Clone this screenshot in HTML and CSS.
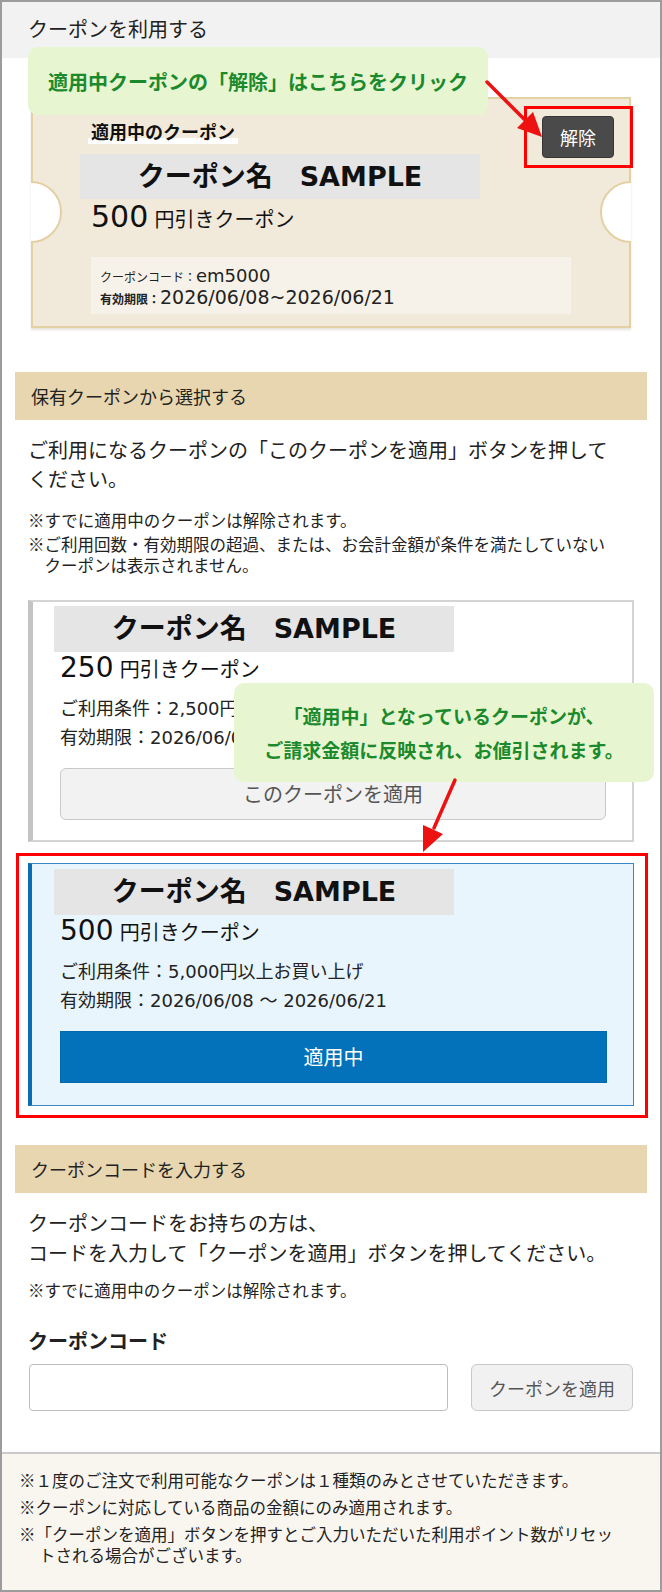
FILE: index.html
```html
<!DOCTYPE html>
<html lang="ja">
<head>
<meta charset="utf-8">
<title>クーポンを利用する</title>
<link rel="stylesheet" href="styles.css">
</head>
<body>
<div class="panel">
  <h1 class="panel-title">クーポンを利用する</h1>

  <section class="current">
    <div class="ticket">
      <span class="notch notch-left"></span>
      <span class="notch notch-right"></span>
      <p class="ticket-label">適用中のクーポン</p>
      <p class="coupon-name ticket-name">クーポン名　SAMPLE</p>
      <p class="ticket-amount"><span class="amount-num">500</span> 円引きクーポン</p>
      <div class="ticket-info">
        <p><span class="info-key">クーポンコード：</span><span class="info-code">em5000</span></p>
        <p><span class="info-key strong">有効期限：</span><span class="info-date">2026/06/08~2026/06/21</span></p>
      </div>
      <button class="release-btn" type="button">解除</button>
      <span class="focus-frame release-frame"></span>
    </div>
  </section>

  <section class="block block-owned">
    <h2 class="block-head">保有クーポンから選択する</h2>
    <div class="block-body">
      <p class="lead">ご利用になるクーポンの「このクーポンを適用」ボタンを押してください。</p>
      <ul class="notes">
        <li>※すでに適用中のクーポンは解除されます。</li>
        <li>※ご利用回数・有効期限の超過、または、お会計金額が条件を満たしていないクーポンは表示されません。</li>
      </ul>

      <div class="coupon-list">
        <div class="coupon">
          <p class="coupon-name">クーポン名　SAMPLE</p>
          <p class="coupon-amount"><span class="amount-num">250</span> 円引きクーポン</p>
          <p class="coupon-meta">ご利用条件：2,500円以上お買い上げ</p>
          <p class="coupon-meta">有効期限：2026/06/08 〜 2026/06/21</p>
          <button class="apply-btn" type="button">このクーポンを適用</button>
        </div>

        <div class="coupon is-active">
          <p class="coupon-name">クーポン名　SAMPLE</p>
          <p class="coupon-amount"><span class="amount-num">500</span> 円引きクーポン</p>
          <p class="coupon-meta">ご利用条件：5,000円以上お買い上げ</p>
          <p class="coupon-meta">有効期限：2026/06/08 〜 2026/06/21</p>
          <button class="apply-btn is-applied" type="button">適用中</button>
          <span class="focus-frame active-frame"></span>
        </div>
      </div>
    </div>
  </section>

  <section class="block block-code">
    <h2 class="block-head">クーポンコードを入力する</h2>
    <div class="block-body">
      <p class="lead lead-code">クーポンコードをお持ちの方は、<br>コードを入力して「クーポンを適用」ボタンを押してください。</p>
      <ul class="notes notes-code">
        <li>※すでに適用中のクーポンは解除されます。</li>
      </ul>
      <label class="form-label" for="coupon-code">クーポンコード</label>
      <div class="code-row">
        <input class="code-input" id="coupon-code" type="text">
        <button class="code-btn" type="button">クーポンを適用</button>
      </div>
    </div>
  </section>

  <footer class="panel-foot">
    <ul class="foot-notes">
      <li>※１度のご注文で利用可能なクーポンは１種類のみとさせていただきます。</li>
      <li>※クーポンに対応している商品の金額にのみ適用されます。</li>
      <li>※「クーポンを適用」ボタンを押すとご入力いただいた利用ポイント数がリセットされる場合がございます。</li>
    </ul>
  </footer>

  <!-- guide callouts -->
  <div class="callout callout-release">適用中クーポンの「解除」はこちらをクリック</div>
  <svg class="pointer pointer-release" viewBox="480 75 70 70" aria-hidden="true">
    <line x1="487" y1="82" x2="527" y2="122" stroke="#ee1111" stroke-width="3.5" stroke-linecap="round"/>
    <polygon points="542,137 517,128 533,112" fill="#ee1111"/>
  </svg>

  <div class="callout callout-applied">「適用中」となっているクーポンが、<br>ご請求金額に反映され、お値引されます。</div>
  <svg class="pointer pointer-applied" viewBox="415 775 50 85" aria-hidden="true">
    <line x1="455" y1="780" x2="434" y2="828" stroke="#ee1111" stroke-width="3.5" stroke-linecap="round"/>
    <polygon points="423,852 443,834 423,825" fill="#ee1111"/>
  </svg>
</div>
</body>
</html>
```

FILE: styles.css
```css
* {
  box-sizing: border-box;
  margin: 0;
  padding: 0;
}

html,
body {
  background: #fff;
}

body {
  font-family: "Noto Sans CJK JP", sans-serif;
  color: #222;
}

button,
input {
  font-family: inherit;
}

.panel {
  position: relative;
  display: flex;
  flex-direction: column;
  width: 662px;
  min-height: 1592px;
  border: 2px solid #9c9c9c;
}

.panel-title {
  height: 56px;
  padding-left: 26px;
  background: #f2f2f2;
  font-size: 20px;
  font-weight: 400;
  line-height: 54px;
  color: #222;
}

/* ---- currently applied coupon ticket ---- */
.current {
  padding: 39px 29px 0;
}

.ticket {
  position: relative;
  height: 231px;
  padding: 21px 0 0 58px;
  border: 2px solid #e3d1a4;
  background: #f1e9da;
  box-shadow: 0 2px 2px rgba(120, 100, 60, 0.18);
}

.notch {
  position: absolute;
  top: 82px;
  width: 62px;
  height: 62px;
  border: 2px solid #e3d1a4;
  border-radius: 50%;
  background: #fff;
}

.notch-left {
  left: -33px;
  clip-path: inset(0 0 0 50%);
}

.notch-right {
  left: 567px;
  clip-path: inset(0 50% 0 0);
}

.ticket-label {
  width: max-content;
  margin-left: -3px;
  padding: 0 3px 2px;
  font-size: 18px;
  font-weight: 700;
  line-height: 22px;
  color: #111;
  background: linear-gradient(transparent 18px, #fff 18px);
}

.coupon-name {
  width: 400px;
  height: 46px;
  background: #e5e5e5;
  text-align: center;
  font-family: "DejaVu Sans", "Noto Sans CJK JP", sans-serif;
  font-size: 27px;
  font-weight: 700;
  line-height: 46px;
  color: #111;
  white-space: nowrap;
}

.ticket-name {
  height: 45px;
  margin: 10px 0 0 -11px;
  line-height: 45px;
}

.ticket-amount {
  height: 40px;
  margin-top: 1px;
  font-family: "DejaVu Sans", "Noto Sans CJK JP", sans-serif;
  font-size: 20px;
  line-height: 40px;
  color: #111;
}

.amount-num {
  font-size: 30px;
  line-height: 1;
}

.ticket-info {
  width: 480px;
  height: 57px;
  margin-top: 17px;
  padding: 7px 0 0 9px;
  background: #f7f2e9;
}

.ticket-info p {
  height: 22px;
  line-height: 22px;
  white-space: nowrap;
  color: #222;
}

.info-key {
  font-size: 12px;
}

.info-key.strong {
  font-weight: 700;
}

.info-code {
  font-family: "DejaVu Sans", sans-serif;
  font-size: 18px;
}

.info-date {
  font-family: "DejaVu Sans", sans-serif;
  font-size: 19px;
}

.release-btn {
  position: absolute;
  left: 509px;
  top: 17px;
  width: 72px;
  height: 42px;
  border: 1px solid #363636;
  border-radius: 4px;
  background: #4a4a4a;
  color: #fff;
  font-size: 18px;
  line-height: 40px;
}

.focus-frame {
  position: absolute;
  border: 3px solid #f00;
  pointer-events: none;
}

.release-frame {
  left: 491px;
  top: 7px;
  width: 109px;
  height: 62px;
}

/* ---- content blocks ---- */
.block {
  margin-top: 44px;
  padding: 0 13px;
}

.block-code {
  margin-top: 39px;
  padding-bottom: 41px;
}

.block-head {
  height: 48px;
  padding-left: 16px;
  background: #e7d6b0;
  font-size: 18px;
  font-weight: 400;
  line-height: 48px;
  color: #222;
}

.block-body {
  padding: 0 13px;
}

.lead {
  margin-top: 15px;
  padding-right: 16px;
  font-size: 20px;
  line-height: 29px;
}

.lead-code {
  line-height: 30px;
}

.notes {
  list-style: none;
  margin-top: 17px;
  padding-right: 16px;
  font-size: 16.5px;
  line-height: 21px;
}

.notes li {
  padding-left: 1em;
  text-indent: -1em;
}

.notes li + li {
  margin-top: 3px;
}

.notes-code {
  margin-top: 12px;
}

/* ---- owned coupon cards ---- */
.coupon-list {
  display: flex;
  flex-direction: column;
  gap: 21px;
  margin-top: 24px;
}

.coupon {
  position: relative;
  padding: 4px 26px 20px 27px;
  border: 2px solid #d4d4d4;
  border-left: 5px solid #c4c4c4;
  background: #fff;
}

.coupon.is-active {
  padding: 5px 26px 22px 28px;
  border: 1px solid #3b87c4;
  border-left: 4px solid #0a6cb2;
  background: #e9f5fd;
}

.coupon .coupon-name {
  margin-left: -6px;
}

.coupon-amount {
  height: 36px;
  font-family: "DejaVu Sans", "Noto Sans CJK JP", sans-serif;
  font-size: 20px;
  line-height: 36px;
  color: #111;
}

.coupon-amount .amount-num {
  font-size: 28px;
}

.coupon-meta {
  font-family: "DejaVu Sans", "Noto Sans CJK JP", sans-serif;
  font-size: 18px;
  line-height: 29px;
  white-space: nowrap;
  color: #222;
}

.coupon-amount + .coupon-meta {
  margin-top: 6px;
}

.apply-btn {
  display: block;
  width: 100%;
  height: 52px;
  margin-top: 16px;
  border: 1px solid #c9c9c9;
  border-radius: 6px;
  background: #f2f2f2;
  color: #555;
  font-size: 20px;
  line-height: 50px;
}

.apply-btn.is-applied {
  border: 1px solid #0468ad;
  border-radius: 0;
  background: #0472bb;
  color: #fff;
}

.active-frame {
  left: -16px;
  top: -11px;
  width: 632px;
  height: 265px;
}

/* ---- coupon code form ---- */
.form-label {
  display: block;
  margin-top: 26px;
  font-size: 20px;
  font-weight: 700;
  line-height: 28px;
  color: #222;
}

.code-row {
  display: flex;
  gap: 23px;
  margin: 9px 1px 0;
}

.code-input {
  flex: 1;
  height: 47px;
  border: 1px solid #bdbdbd;
  border-radius: 4px;
  background: #fff;
}

.code-btn {
  width: 162px;
  height: 47px;
  border: 1px solid #c8c8c8;
  border-radius: 6px;
  background: #f1f1f1;
  color: #555;
  font-size: 18px;
}

/* ---- footer notes ---- */
.panel-foot {
  flex: 1;
  padding: 16px 40px 24px 17px;
  border-top: 2px solid #cacaca;
  background: #f9f6f0;
}

.foot-notes {
  list-style: none;
  font-size: 16.5px;
  line-height: 21px;
  color: #222;
}

.foot-notes li {
  padding-left: 20px;
  text-indent: -20px;
}

.foot-notes li + li {
  margin-top: 6px;
}

/* ---- guide callouts ---- */
.callout {
  position: absolute;
  display: flex;
  align-items: center;
  border-radius: 10px;
  background: #e7f6d1;
  color: #1c8a2c;
  font-weight: 700;
}

.callout-release {
  left: 26px;
  top: 45px;
  width: 460px;
  height: 68px;
  padding-left: 20px;
  font-size: 20px;
}

.callout-applied {
  left: 232px;
  top: 681px;
  width: 420px;
  height: 99px;
  justify-content: center;
  text-align: center;
  font-size: 19px;
  line-height: 34px;
}

.pointer {
  position: absolute;
  overflow: visible;
}

.pointer-release {
  left: 478px;
  top: 73px;
  width: 70px;
  height: 70px;
}

.pointer-applied {
  left: 413px;
  top: 773px;
  width: 50px;
  height: 85px;
}
```
